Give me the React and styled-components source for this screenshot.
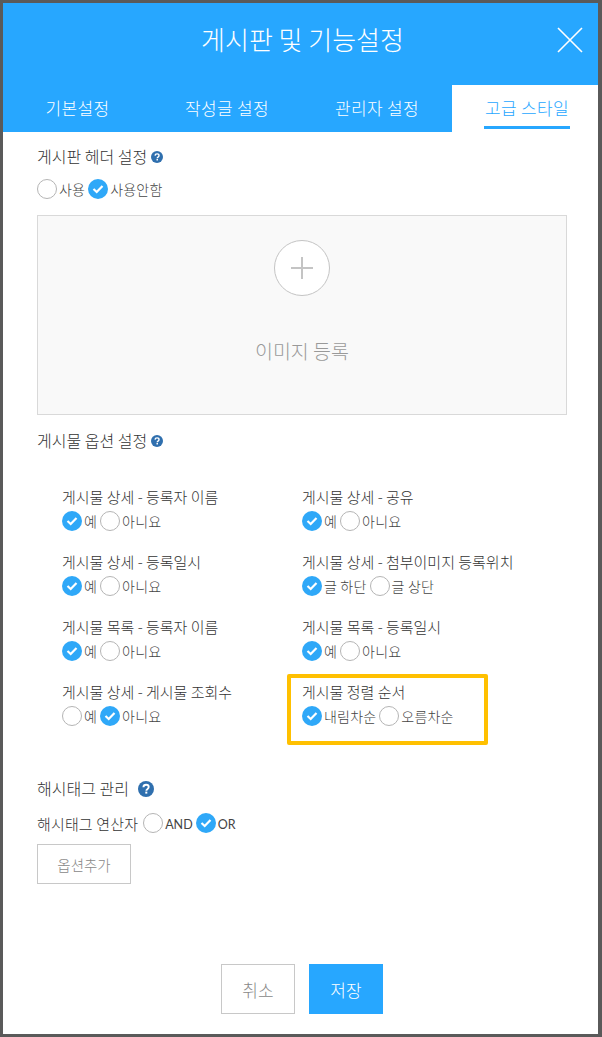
import React from "react";
import styled, { createGlobalStyle } from "styled-components";

const Global = createGlobalStyle`
  html, body { margin: 0; padding: 0; background: #fff; }
  * { box-sizing: border-box; }
  body { font-family: "Noto Sans CJK KR", "Noto Sans", sans-serif; font-weight: 300; color: #333; }
`;
const Frame = styled.div`
  width: 602px; height: 1037px;
  border: solid #5a5a5a; border-width: 3px 4px 3px 3px;
  background: #fff; display: flex; flex-direction: column;
`;
const Header = styled.header`
  background: #27a7ff; height: 129px; display: flex; flex-direction: column; position: relative;
`;
const Title = styled.h1`
  margin: 0; height: 82px; padding: 17px 0 0 4px; text-align: center;
  font-size: 26px; line-height: 38px; font-weight: 300; color: #fff;
`;
const Close = styled.button`
  position: absolute; right: 15px; top: 24px; width: 26px; height: 26px;
  border: 0; padding: 0; background: none; display: block;
`;
const Tabs = styled.nav`
  display: grid; grid-template-columns: 149px 150px 150px 146px; height: 47px;
`;
const Tab = styled.div`
  position: relative; display: flex; justify-content: center; padding-top: 11px;
  padding-left: ${p => (p.$active ? "4px" : "0")};
  font-size: 17px; line-height: 24px; letter-spacing: 0.3px;
  color: ${p => (p.$active ? "#27a7ff" : "#fff")};
  background: ${p => (p.$active ? "#fff" : "transparent")};
  span { display: block; height: 33px; padding: 0 1px; border-bottom: ${p => (p.$active ? "3px solid #27a7ff" : "0")}; }
`;
const Body = styled.main`
  flex: 1; padding: 12px 31px 0 34px; display: flex; flex-direction: column;
`;
const SectionTitle = styled.div`
  display: flex; align-items: center; gap: ${p => p.$gap || 4}px;
  font-size: 16px; line-height: 24px; height: 24px; color: #333;
`;
const Help = styled.svg`
  width: ${p => p.$size}px; height: ${p => p.$size}px; display: block; flex: none; margin-top: 2px;
`;
const RadioRow = styled.div`
  display: flex; align-items: center; height: 22px; font-size: 14px; letter-spacing: 0.2px; color: #444;
`;
const HeaderRadios = styled(RadioRow)`
  margin-top: 10px;
`;
const Circle = styled.span`
  width: 20px; height: 20px; border-radius: 50%; flex: none; display: flex;
  align-items: center; justify-content: center;
  background: ${p => (p.$on ? "#2fa8f8" : "#fff")};
  border: ${p => (p.$on ? "0" : "1.5px solid #b5b5b5")};
`;
const OptLabel = styled.label`
  display: flex; align-items: center; gap: 2px; margin-right: 3px;
`;
const Latin = styled.span`
  font-family: "Lato", "Noto Sans", sans-serif; font-weight: 400; font-size: 12.5px; letter-spacing: 0;
`;
const Upload = styled.div`
  margin-top: 15px; height: 200px; border: 1px solid #d9d9d9; background: #f9f9f9;
  display: flex; flex-direction: column; align-items: center; padding-top: 24px;
`;
const Plus = styled.div`
  width: 56px; height: 56px; border: 1px solid #c4c4c4; border-radius: 50%; background: #fff;
  display: flex; align-items: center; justify-content: center;
`;
const UploadText = styled.div`
  margin-top: 41px; font-size: 19.5px; line-height: 28px; color: #999;
`;
const OptionsTitle = styled(SectionTitle)`
  margin-top: 13px;
`;
const Grid = styled.div`
  margin-top: 34px; margin-left: 25px; display: grid;
  grid-template-columns: 240px 240px; grid-auto-rows: 65px;
`;
const Cell = styled.div`
  position: relative;
  ${p => p.$highlight && `
    &::before {
      content: ""; box-sizing: border-box; position: absolute; left: -15px; top: -7px; width: 201px; height: 71px;
      border: 4px solid #ffc000; border-radius: 2px; pointer-events: none;
    }
  `}
`;
const CellTitle = styled.div`
  font-size: 15px; line-height: 22px; height: 24px; color: #333;
`;
const Hash = styled.div`
  margin-top: 30px; display: flex; flex-direction: column;
`;
const HashRow = styled.div`
  margin-top: 11px; display: flex; align-items: center; height: 24px;
  font-size: 15px; letter-spacing: 0.15px; color: #333; gap: 5px;
`;
const AddBtn = styled.button`
  margin-top: 9px; width: 94px; height: 40px; background: #fff; border: 1px solid #c8c8c8;
  font: inherit; font-size: 14.5px; color: #888; padding: 0;
`;
const Footer = styled.div`
  margin-top: 80px; display: flex; justify-content: center; gap: 14px;
`;
const FootBtn = styled.button`
  width: 74px; height: 50px; font: inherit; font-size: 17px; padding: 0;
  background: ${p => (p.$primary ? "#27a7ff" : "#fff")};
  color: ${p => (p.$primary ? "#fff" : "#888")};
  border: ${p => (p.$primary ? "0" : "1px solid #c8c8c8")};
`;

const Check = () => (
  <svg width="12" height="10" viewBox="0 0 12 10" fill="none">
    <path d="M1.5 5l3.2 3 5.8-6" stroke="#fff" strokeWidth="2.2" />
  </svg>
);
const Radio = ({ on, children }) => (
  <OptLabel>
    <Circle $on={on}>{on && <Check />}</Circle>
    <span>{children}</span>
  </OptLabel>
);
const HelpIcon = ({ size = 12 }) => (
  <Help $size={size} viewBox="0 0 16 16">
    <circle cx="8" cy="8" r="8" fill="#2f6fae" />
    <path d="M5.4 6.2C5.5 4.6 6.6 3.8 8.1 3.8c1.5 0 2.6.9 2.6 2.2 0 1.1-.6 1.6-1.4 2.2-.6.4-.9.7-.9 1.5" fill="none" stroke="#fff" strokeWidth="1.9" />
    <rect x="7.3" y="10.6" width="2" height="2" fill="#fff" />
  </Help>
);

const options = [
  ["게시물 상세 - 등록자 이름", "예", "아니요", 0],
  ["게시물 상세 - 공유", "예", "아니요", 0],
  ["게시물 상세 - 등록일시", "예", "아니요", 0],
  ["게시물 상세 - 첨부이미지 등록위치", "글 하단", "글 상단", 0],
  ["게시물 목록 - 등록자 이름", "예", "아니요", 0],
  ["게시물 목록 - 등록일시", "예", "아니요", 0],
  ["게시물 상세 - 게시물 조회수", "예", "아니요", 1],
  ["게시물 정렬 순서", "내림차순", "오름차순", 0, true],
];

export default function App() {
  return (
    <Frame>
      <Global />
      <Header>
        <Title>게시판 및 기능설정</Title>
        <Close aria-label="닫기">
          <svg width="26" height="26" viewBox="0 0 26 26" fill="none">
            <path d="M1 1l24 24M25 1L1 25" stroke="#fff" strokeWidth="1.6" />
          </svg>
        </Close>
        <Tabs>
          <Tab><span>기본설정</span></Tab>
          <Tab><span>작성글 설정</span></Tab>
          <Tab><span>관리자 설정</span></Tab>
          <Tab $active><span>고급 스타일</span></Tab>
        </Tabs>
      </Header>
      <Body>
        <SectionTitle>게시판 헤더 설정<HelpIcon /></SectionTitle>
        <HeaderRadios>
          <Radio>사용</Radio>
          <Radio on>사용안함</Radio>
        </HeaderRadios>
        <Upload>
          <Plus>
            <svg width="24" height="24" viewBox="0 0 24 24" fill="none">
              <path d="M12 1v22M1 12h22" stroke="#c4c4c4" strokeWidth="2" />
            </svg>
          </Plus>
          <UploadText>이미지 등록</UploadText>
        </Upload>
        <OptionsTitle>게시물 옵션 설정<HelpIcon /></OptionsTitle>
        <Grid>
          {options.map(([t, a, b, sel, hl]) => (
            <Cell key={t} $highlight={hl}>
              <CellTitle>{t}</CellTitle>
              <RadioRow>
                <Radio on={sel === 0}>{a}</Radio>
                <Radio on={sel === 1}>{b}</Radio>
              </RadioRow>
            </Cell>
          ))}
        </Grid>
        <Hash>
          <SectionTitle $gap={9}>해시태그 관리<HelpIcon size={16} /></SectionTitle>
          <HashRow>
            해시태그 연산자
            <RadioRow>
              <Radio><Latin>AND</Latin></Radio>
              <Radio on><Latin>OR</Latin></Radio>
            </RadioRow>
          </HashRow>
          <AddBtn>옵션추가</AddBtn>
        </Hash>
        <Footer>
          <FootBtn>취소</FootBtn>
          <FootBtn $primary>저장</FootBtn>
        </Footer>
      </Body>
    </Frame>
  );
}
